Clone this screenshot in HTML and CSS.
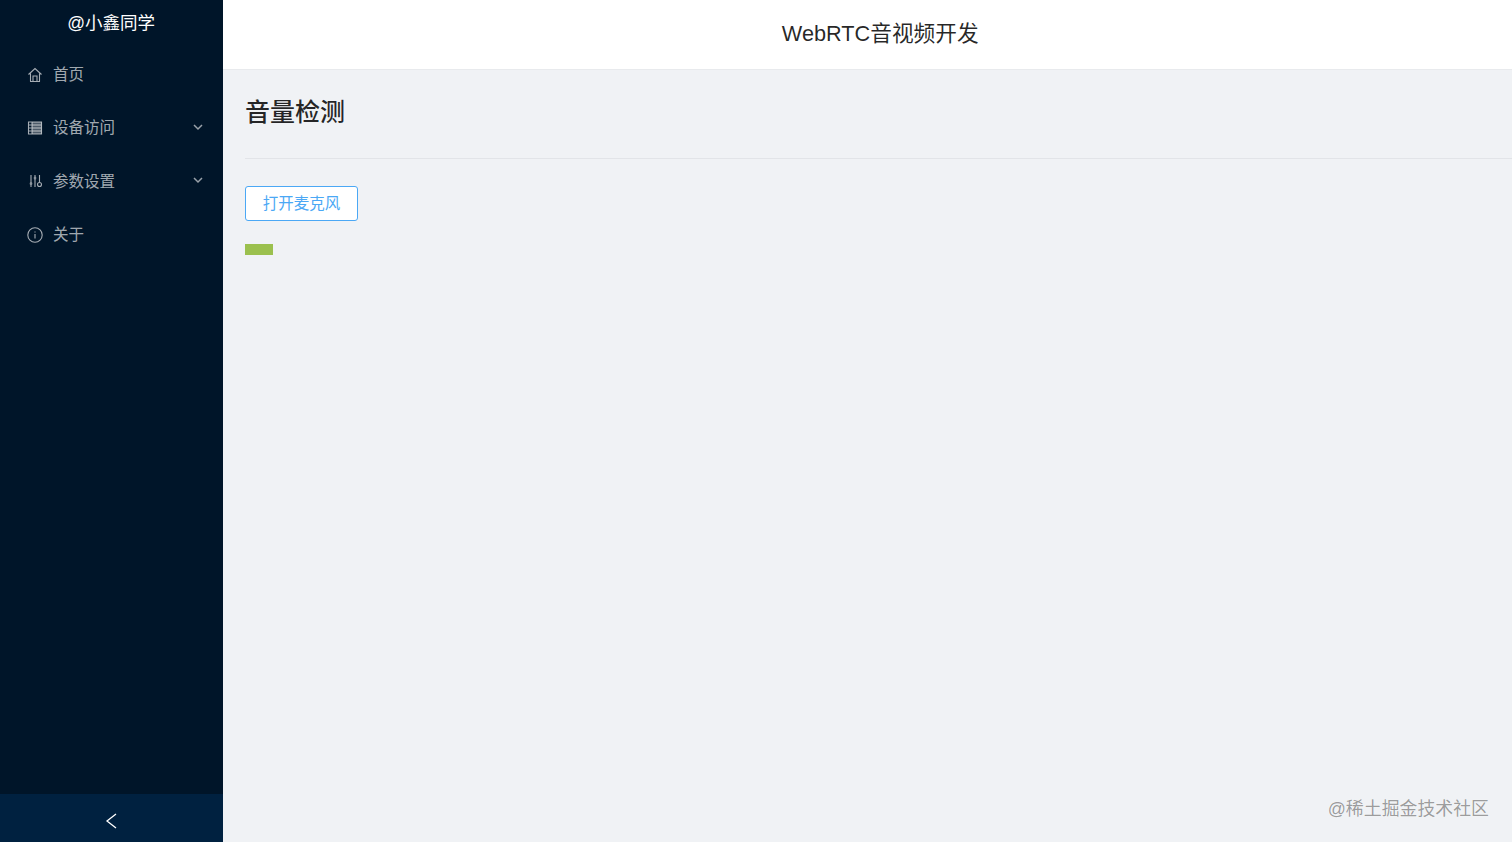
FILE: index.html
```html
<!DOCTYPE html>
<html lang="zh-CN">
<head>
    <meta charset="UTF-8">
    <meta name="viewport" content="width=device-width, initial-scale=1.0">
    <title>WebRTC音视频开发</title>
    <link rel="stylesheet" href="styles.css">
</head>
<body>
    <aside class="sider">
        <div class="logo">@小鑫同学</div>
        <nav class="menu">
            <div class="menu-item">
                <svg class="menu-icon" viewBox="0 0 16 16"><path d="M1.500 7.500 8 1.500l6.500 6M3 14.500h10M3.500 6.500v8M12.500 6.500v8M6 14.500V9h4v5.500"/></svg>
                <span class="menu-label">首页</span>
            </div>
            <div class="menu-item">
                <svg class="menu-icon" viewBox="0 0 16 16"><path class="fill" d="M5 2h9.500v12H5z"/><path d="M1.500 2h13v12h-13zM5 2v12M1.500 5H5M1.500 8H5M1.500 11H5M5 5h9.500M5 8h9.500M5 11h9.500"/></svg>
                <span class="menu-label">设备访问</span>
                <svg class="menu-arrow" viewBox="0 0 12 12"><path d="M2 4l4 4 4-4"/></svg>
            </div>
            <div class="menu-item">
                <svg class="menu-icon" viewBox="0 0 16 16"><path d="M4 2v12M8 2v12M12.500 2v7"/><circle class="fill" cx="4" cy="10.500" r="1.500"/><circle class="fill" cx="8" cy="5" r="1.500"/><circle cx="12.500" cy="11.500" r="2"/></svg>
                <span class="menu-label">参数设置</span>
                <svg class="menu-arrow" viewBox="0 0 12 12"><path d="M2 4l4 4 4-4"/></svg>
            </div>
            <div class="menu-item">
                <svg class="menu-icon" viewBox="0 0 16 16"><circle cx="8" cy="8" r="7.200"/><path d="M8 7v4.500M8 4.500v1"/></svg>
                <span class="menu-label">关于</span>
            </div>
        </nav>
        <div class="trigger">
            <svg viewBox="0 0 12 16"><path d="M11 1 2 8l9 7"/></svg>
        </div>
    </aside>
    <div class="layout">
        <header class="top-bar">WebRTC音视频开发</header>
        <main class="content">
            <h1 class="page-title">音量检测</h1>
            <hr class="divider">
            <button class="open-btn">打开麦克风</button>
            <div class="volume-bar"></div>
        </main>
        <div class="watermark">@稀土掘金技术社区</div>
    </div>
</body>
</html>
```

FILE: styles.css
```css
* {
    box-sizing: border-box;
}

html, body {
    height: 100%;
}

body {
    margin: 0;
    display: flex;
    overflow: hidden;
    font-family: "Liberation Sans", "Noto Sans CJK SC", sans-serif;
    background-color: #f0f2f5;
}

.sider {
    width: 222.500px;
    flex-shrink: 0;
    display: flex;
    flex-direction: column;
    background-color: #001529;
}

.logo {
    height: 47px;
    line-height: 47px;
    text-align: center;
    font-size: 17.500px;
    color: #fff;
}

.menu {
    flex: 1;
    padding-top: 1px;
}

.menu-item {
    height: 53.300px;
    display: flex;
    align-items: center;
    padding: 0 19px 0 26.500px;
    color: rgba(255, 255, 255, 0.65);
}

.menu-icon {
    width: 16px;
    height: 16px;
    margin-right: 10.500px;
    fill: none;
    stroke: rgba(255, 255, 255, 0.65);
    stroke-width: 1.100;
}

.menu-icon .fill {
    fill: rgba(255, 255, 255, 0.3);
    stroke: none;
}

.menu-label {
    flex: 1;
    padding-bottom: 3px;
    font-size: 15.500px;
}

.menu-arrow {
    width: 12px;
    height: 12px;
    margin-top: -2px;
    fill: none;
    stroke: rgba(255, 255, 255, 0.6);
    stroke-width: 1.500;
}

.trigger {
    height: 48px;
    display: flex;
    align-items: center;
    justify-content: center;
    background-color: #002140;
}

.trigger svg {
    width: 12px;
    height: 16px;
    margin-top: 6px;
    fill: none;
    stroke: #fff;
    stroke-width: 1.300;
}

.layout {
    flex: 1;
    position: relative;
    display: flex;
    flex-direction: column;
}

.top-bar {
    height: 70px;
    padding: 0 0 7px 26px;
    display: flex;
    align-items: center;
    justify-content: center;
    background-color: #fff;
    border-bottom: 1px solid #e8eaed;
    font-size: 21.700px;
    color: rgba(0, 0, 0, 0.85);
}

.content {
    flex: 1;
    padding: 0 0 0 22.500px;
}

.page-title {
    margin: 25px 0 0;
    height: 63px;
    font-size: 25px;
    line-height: 34px;
    font-weight: 500;
    color: rgba(0, 0, 0, 0.85);
}

.divider {
    margin: 0 0 27px;
    border: none;
    border-top: 1px solid #e2e4e8;
}

.open-btn {
    display: block;
    width: 113px;
    height: 35px;
    padding: 0 0 3px;
    background-color: #fff;
    border: 1px solid #4ba8f5;
    border-radius: 3px;
    font-family: inherit;
    font-size: 15.500px;
    color: #4ba8f5;
}

.volume-bar {
    width: 28px;
    height: 11px;
    margin-top: 23px;
    background-color: #9bc04e;
}

.watermark {
    position: absolute;
    right: 23px;
    bottom: 22px;
    font-size: 17.900px;
    color: rgba(0, 0, 0, 0.4);
    text-shadow: 0 0 1px rgba(255, 255, 255, 0.8);
}
```
